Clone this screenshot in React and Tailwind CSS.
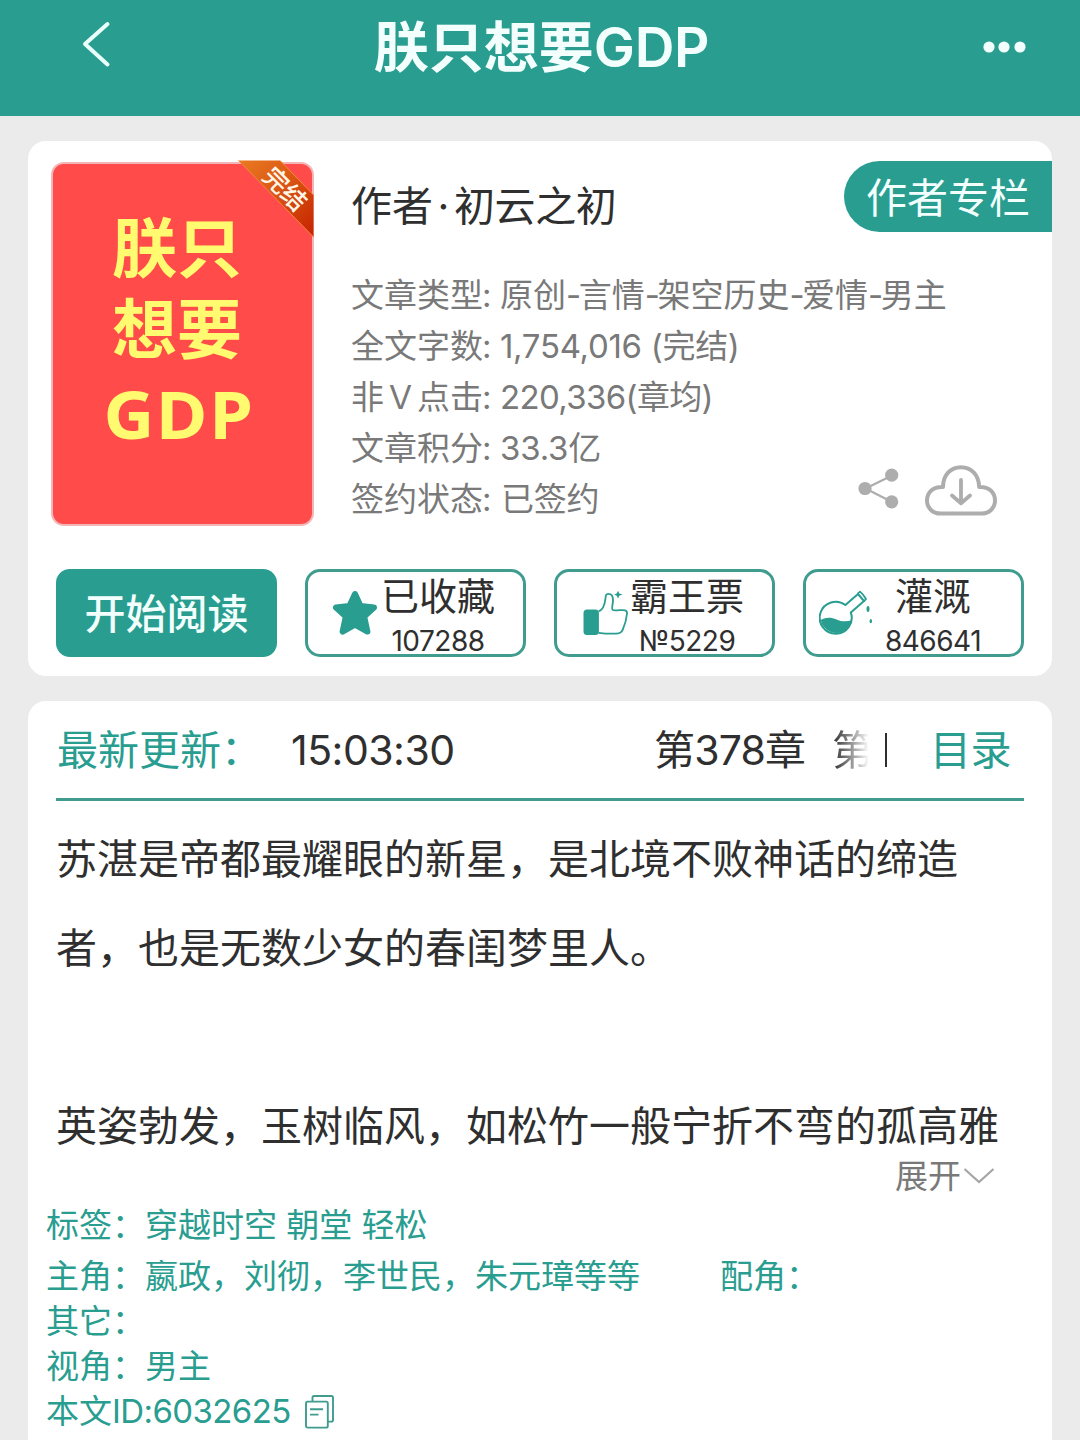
import React from "react";

const INFO = [
  { label: "文章类型", value: "原创-言情-架空历史-爱情-男主", cls: "tracking-[0px]" },
  { label: "全文字数", value: "1,754,016 (完结)", cls: "tracking-[-0.3px]" },
  { label: "非Ｖ点击", value: "220,336(章均)", cls: "tracking-[-0.65px]" },
  { label: "文章积分", value: "33.3亿", cls: "tracking-[-0.2px]" },
  { label: "签约状态", value: "已签约", cls: "pl-[1px] tracking-[-0.2px]" },
];

function BackIcon() {
  return (
    <svg width="30" height="48" viewBox="0 0 30 48" fill="none" className="block">
      <path d="M26.5 3 L4 23 L26.5 43.5" stroke="#e8fffb" strokeWidth="4" strokeLinecap="round" strokeLinejoin="round" />
    </svg>
  );
}

function MoreIcon() {
  return (
    <svg width="44" height="12" viewBox="0 0 44 12" fill="#f2fffd" className="block">
      <circle cx="6" cy="6" r="5.6" />
      <circle cx="21" cy="6" r="5.6" />
      <circle cx="37" cy="6" r="5.6" />
    </svg>
  );
}

function ShareIcon() {
  return (
    <svg width="42" height="42" viewBox="0 0 42 42" className="block">
      <path d="M34 7.5 L7.5 20.5 L34 34" fill="none" stroke="#adadad" strokeWidth="2.2" />
      <circle cx="7" cy="20.5" r="6.6" fill="#adadad" />
      <circle cx="33.7" cy="7.2" r="6.6" fill="#adadad" />
      <circle cx="33.7" cy="33.8" r="6.6" fill="#adadad" />
    </svg>
  );
}

function CloudIcon() {
  return (
    <svg width="74" height="52" viewBox="0 0 74 52" fill="none" stroke="#adadad" className="block">
      <path
        d="M16.5 48.6 C8.5 48.6 3 42.6 3 35.6 C3 27.5 9 21.5 19 22 C19 10 26.4 2.2 37 2.2 C47.6 2.2 54.8 10 55.2 22 C65 21.5 71 27.5 71 35.6 C71 42.6 65.5 48.6 57.5 48.6 Z"
        strokeWidth="4"
        strokeLinejoin="round"
      />
      <path d="M37 15 V38 M28 30.5 L37 38.2 L46 30.5" strokeWidth="3.8" strokeLinecap="round" strokeLinejoin="round" />
    </svg>
  );
}

function StarIcon() {
  return (
    <svg width="46" height="46" viewBox="0 0 46 46" className="block">
      <path
        d="M23 4 L28.6 16 L42 17.6 L32.2 26.6 L35.4 41.6 L23 34.6 L10.6 41.6 L13.8 26.6 L4 17.6 L17.4 16 Z"
        fill="#299d90"
        stroke="#299d90"
        strokeWidth="6"
        strokeLinejoin="round"
      />
    </svg>
  );
}

function ThumbIcon() {
  return (
    <svg width="46" height="46" viewBox="0 0 46 46" fill="none" className="block">
      <rect x="0.5" y="18.5" width="15.4" height="25.5" rx="3.5" fill="#299d90" />
      <path
        d="M15.5 20.5 C20 19 21.6 15 22.4 8 C22.8 4 23 2.8 25.4 2.8 C28.6 2.8 30 5 30 9 C30 14 28.4 16.5 29.4 18.6 C30 19.8 33 19.4 36 19.2 C41 18.9 44.4 18.6 44 22.5 C43.4 28.5 42 34 39.6 39 C38.2 41.8 37 42.6 33 42.6 C27 42.8 22 42.6 15.5 41.8"
        stroke="#299d90"
        strokeWidth="1.8"
        strokeLinejoin="round"
      />
      <path d="M35 -0.2 L36.3 2.5 L39.6 3.6 L36.3 4.7 L35 7.4 L33.7 4.7 L31.2 3.6 L33.7 2.5 Z" fill="#299d90" />
    </svg>
  );
}

function FlaskIcon() {
  return (
    <svg width="56" height="48" viewBox="0 0 56 48" fill="none" className="block">
      <path
        d="M26.4 15 L39 4 L45 11 L31.8 22.4 A16 16 0 1 1 26.4 15 Z"
        stroke="#299d90"
        strokeWidth="2"
        strokeLinejoin="round"
      />
      <path d="M38.6 3.6 L41 1.6 Q44.6 4.4 47 9 L45 11.4" stroke="#299d90" strokeWidth="1.8" strokeLinejoin="round" />
      <path d="M1.8 30 C7 27.2 12 27.2 17.5 29.4 C22.5 31.8 28 31.8 33.2 30 A16 16 0 0 1 1.8 30 Z" fill="#299d90" />
      <ellipse cx="49" cy="19" rx="1.5" ry="3" fill="#299d90" />
      <ellipse cx="51.8" cy="31.2" rx="1.2" ry="2.1" fill="#299d90" />
    </svg>
  );
}

function CopyIcon() {
  return (
    <svg width="30" height="34" viewBox="0 0 30 34" fill="none" stroke="#3f9c8f" className="block">
      <path d="M7.5 6 V2.6 Q7.5 1 9 1 H26.5 Q28 1 28 2.6 V25 Q28 26.6 26.5 26.6 H23" strokeWidth="1.9" />
      <rect x="1" y="6.6" width="21.8" height="26" rx="1.6" strokeWidth="1.9" />
      <path d="M5 14.2 H18 M5 19.6 H13.5" strokeWidth="1.9" />
    </svg>
  );
}

function InfoValue({ text, cls }) {
  return (
    <dd className={cls}>
      {text.split(/(-)/).map((part, i) =>
        part === "-" ? (
          <span key={i} className="tracking-[-2.5px]">
            -
          </span>
        ) : (
          part
        )
      )}
    </dd>
  );
}

function ActionButton({ icon, iconCls, textCls, title, count }) {
  return (
    <button className="flex h-[88px] overflow-hidden rounded-[15px] border-[3px] border-[#3f9c8f] bg-white text-[#2f2f2f]">
      <span className={iconCls}>{icon}</span>
      <span className={textCls}>
        <span className="mt-[2px] block h-[44px] text-[38px] leading-[44px]">{title}</span>
        <span className="mt-[2px] block h-[42px] text-[28px] leading-[42px] tracking-[-0.5px]">{count}</span>
      </span>
    </button>
  );
}

function Cover() {
  return (
    <div className="relative mt-[21px] h-[364px] w-[263px] shrink-0">
      <div className="flex h-full w-full flex-col items-center rounded-[13px] border-2 border-[#f3b6b8] bg-[#ff4b49] pr-[11px] font-bold text-[#fffa70]">
        <span className="mt-[44px] block h-[81px] text-[65px] leading-[81px]">朕只</span>
        <span className="block h-[81px] text-[65px] leading-[81px]">想要</span>
        <span className="ml-[3px] block h-[86px] scale-x-105 font-['Open_Sans'] text-[67px] leading-[86px] tracking-[1.2px]">
          GDP
        </span>
      </div>
      <div className="absolute -top-[2px] right-0 h-[78px] w-[76px]">
        <svg width="76" height="78" viewBox="0 0 76 78" className="block">
          <defs>
            <linearGradient id="ribbon" x1="0" y1="0" x2="1" y2="1">
              <stop offset="0" stopColor="#ea7a22" />
              <stop offset="0.5" stopColor="#d95312" />
              <stop offset="1" stopColor="#c52200" />
            </linearGradient>
          </defs>
          <path d="M0.5 0.5 H42 L75.5 35 V77 Z" fill="url(#ribbon)" />
          <path d="M0.5 0.5 L75.5 77 M42 0.5 L75.5 35" stroke="#f08a3c" strokeWidth="1" fill="none" />
        </svg>
        <span className="absolute left-[22px] top-[15px] block w-[50px] rotate-45 whitespace-nowrap text-center text-[25px] font-medium leading-[28px] text-[#fff6e8]">
          完结
        </span>
      </div>
    </div>
  );
}

export default function App() {
  return (
    <div className="h-[1440px] w-[1080px] overflow-hidden whitespace-nowrap bg-[#ebebeb] font-['Inter','Noto_Sans_CJK_SC',sans-serif]">
      <header className="flex h-[116px] items-start justify-between bg-[#299d90] pl-[81px] pr-[53px]">
        <div className="w-[180px] pt-[21px]">
          <BackIcon />
        </div>
        <h1 className="pt-[7px] text-[55px] font-semibold leading-[80px] text-[#f2fffd]">
          朕只想要<span className="tracking-[-0.3px]">GDP</span>
        </h1>
        <div className="flex w-[205px] justify-end pt-[41px]">
          <MoreIcon />
        </div>
      </header>

      <section className="mx-[28px] mt-[25px] h-[535px] rounded-[18px] bg-white">
        <div className="flex h-[428px] pl-[23px]">
          <Cover />
          <div className="ml-[37px] flex-1">
            <div className="flex h-[129px] items-start justify-between pt-[20px]">
              <div className="flex h-[91px] items-center text-[41px] text-[#2f2f2f]">
                <span>作者</span>
                <span className="w-[21px] text-center">·</span>
                <span className="tracking-[-0.4px]">初云之初</span>
              </div>
              <div className="h-[71px] w-[208px] rounded-l-[36px] bg-[#299d90] pl-[22px] text-[41px] leading-[74px] text-[#f2fffd]">
                作者专栏
              </div>
            </div>
            <dl className="text-[33px] leading-[51px] text-[#797979]">
              {INFO.map((row) => (
                <div key={row.label} className="flex h-[51px]">
                  <dt className="w-[149px]">
                    {row.label}
                    <span className="ml-[-1px]">:</span>
                  </dt>
                  <InfoValue text={row.value} cls={row.cls} />
                </div>
              ))}
            </dl>
            <div className="-mt-[60px] flex justify-end gap-[24px] pr-[54px]">
              <div className="pt-[3px]">
                <ShareIcon />
              </div>
              <CloudIcon />
            </div>
          </div>
        </div>

        <div className="grid grid-cols-4 gap-[28px] px-[28px]">
          <button className="h-[88px] rounded-[14px] bg-[#299d90] text-[41px] font-medium leading-[90px] text-[#f2fffd]">
            开始阅读
          </button>
          <ActionButton
            icon={<StarIcon />}
            iconCls="ml-[24px] mt-[18px] w-[46px] shrink-0"
            textCls="ml-[2px] w-[116px] shrink-0 text-center"
            title="已收藏"
            count="107288"
          />
          <ActionButton
            icon={<ThumbIcon />}
            iconCls="ml-[26px] mt-[19px] w-[46px] shrink-0"
            textCls="ml-[0px] w-[116px] shrink-0 text-center"
            title="霸王票"
            count="№5229"
          />
          <ActionButton
            icon={<FlaskIcon />}
            iconCls="ml-[13px] mt-[18px] w-[56px] shrink-0"
            textCls="ml-[0px] w-[116px] shrink-0 text-center"
            title="灌溉"
            count="846641"
          />
        </div>
      </section>

      <section className="mx-[28px] mt-[25px] h-[760px] rounded-t-[18px] bg-white">
        <div className="mx-[28px] flex h-[100px] items-center border-b-[3px] border-[#3f9c8f] text-[41px] leading-[62px] text-[#2f2f2f]">
          <span className="w-[235px] pl-[1px] text-[#299d90]">最新更新：</span>
          <span className="w-[363px] tracking-[-0.5px]">15:03:30</span>
          <span className="w-[178px] tracking-[-0.8px]">第378章</span>
          <span className="w-[41px] bg-linear-to-r from-[#2f2f2f] to-[#ffffff] to-90% bg-clip-text text-transparent">第</span>
          <span className="ml-[12px] h-[34px] w-[2px] bg-[#2f2f2f]" />
          <span className="ml-[43px] tracking-[-0.5px] text-[#299d90]">目录</span>
        </div>

        <div className="ml-[28px] mt-[14px] text-[41px] leading-[89px] text-[#2f2f2f]">
          <p>苏湛是帝都最耀眼的新星，是北境不败神话的缔造</p>
          <p>者，也是无数少女的春闺梦里人。</p>
          <p className="mt-[89px]">英姿勃发，玉树临风，如松竹一般宁折不弯的孤高雅</p>
        </div>

        <div className="-mt-[17px] flex h-[44px] items-center justify-end pr-[57px] text-[33px] leading-[44px] text-[#797979]">
          展开
          <svg width="32" height="18" viewBox="0 0 32 18" fill="none" className="ml-[2px] block">
            <path d="M1.5 2 L16 15 L30.5 2" stroke="#a5a5a5" strokeWidth="2.2" />
          </svg>
        </div>

        <div className="ml-[18px] mt-[5px] text-[33px] leading-[45px] text-[#299d90]">
          <p className="h-[51px]">标签：穿越时空 朝堂 轻松</p>
          <p className="flex h-[45px]">
            <span className="w-[674px]">主角：嬴政，刘彻，李世民，朱元璋等等</span>
            <span>配角：</span>
          </p>
          <p className="h-[45px]">其它：</p>
          <p className="h-[45px]">视角：男主</p>
          <p className="flex h-[45px] items-center">
            <span>
              本文<span className="tracking-[-0.6px]">ID:6032625</span>
            </span>
            <span className="ml-[14px]">
              <CopyIcon />
            </span>
          </p>
        </div>
      </section>
    </div>
  );
}
